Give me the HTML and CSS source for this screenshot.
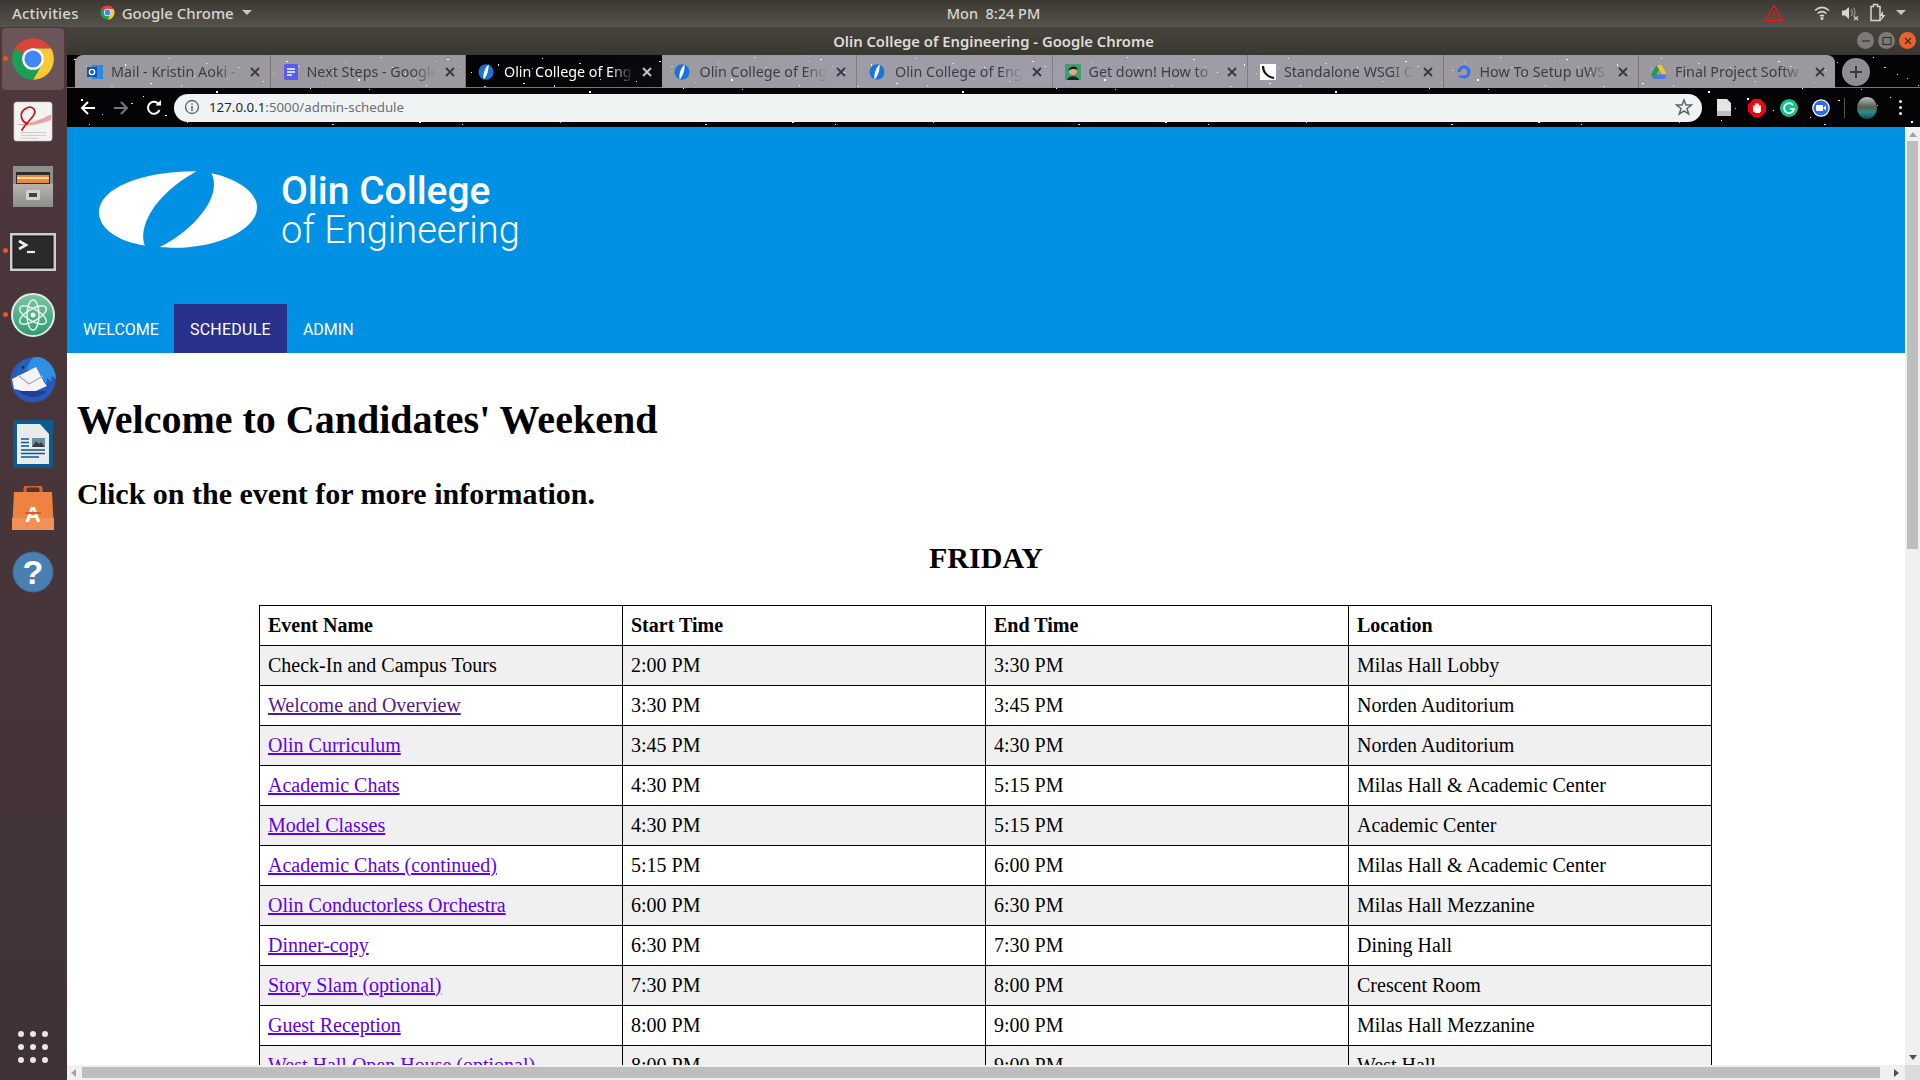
FILE: index.html
```html
<!DOCTYPE html>
<html lang="en">
<head>
  <meta charset="UTF-8" />
  <meta name="viewport" content="width=device-width, initial-scale=1.0"/>
  <title>Olin College of Engineering</title>
  <link rel="stylesheet" href="styles.css">
</head>
<body>
  <svg class="defs" width="0" height="0">
    <symbol id="chrome" viewBox="0 0 48 48">
      <path fill="#db4437" d="M6.68 14A20 20 0 0 1 41.32 14H24A10 10 0 0 0 15.34 19Z"/>
      <path fill="#fcc934" d="M41.32 14A20 20 0 0 1 24 44L32.66 29A10 10 0 0 0 24 14Z"/>
      <path fill="#1e9e54" d="M6.68 14A20 20 0 0 0 24 44L32.66 29A10 10 0 0 1 15.34 19Z"/>
      <circle cx="24" cy="24" r="10.4" fill="#fff"/>
      <circle cx="24" cy="24" r="8.2" fill="#4285f4"/>
    </symbol>
    <symbol id="olin" viewBox="0 0 16 16">
      <ellipse cx="8" cy="8" rx="7.500" ry="7.800" fill="#1a73d8"/>
      <path fill="#fff" d="M10.6 .4C8 2.500 6 6.500 5.500 10.500C5.300 12.500 5.400 14.500 5.800 15.500C7.500 13.500 9.800 9.500 10.300 5.500C10.600 3.200 10.700 1.500 10.600 .4Z"/>
    </symbol>
    <symbol id="close" viewBox="0 0 12 12">
      <path d="M2 2L10 10M10 2L2 10" fill="none" stroke="currentColor" stroke-width="1.800"/>
    </symbol>
  </svg>

  <header class="topbar">
    <div class="topbar-left">
      <span class="activities">Activities</span>
      <span class="app-menu">
        <svg class="mini" width="17" height="17"><use href="#chrome"/></svg>
        Google Chrome
        <i class="caret"></i>
      </span>
    </div>
    <div class="clock">Mon&nbsp;&nbsp;8:24 PM</div>
    <div class="indicators">
      <svg width="20" height="18" viewBox="0 0 20 18"><path d="M10 1.500L19 16.500H1Z" fill="none" stroke="#f01818" stroke-width="1.300"/><path d="M10 6.500V12M10 13.300V15" stroke="#f01818" stroke-width="1.500"/></svg>
      <span class="indicator-gap"></span>
      <svg width="18" height="16" viewBox="0 0 18 16"><path d="M2 5.500C6.500 1.500 11.500 1.500 16 5.500M4.500 8.500C7.500 6 10.500 6 13.500 8.500M7 11C8.300 10.200 9.700 10.200 11 11" fill="none" stroke="#d8d6d2" stroke-width="1.500"/><circle cx="9" cy="13.500" r="1.500" fill="#d8d6d2"/></svg>
      <svg width="18" height="16" viewBox="0 0 18 16"><path d="M1 5.500H4L8 2V14L4 10.500H1Z" fill="#d8d6d2"/><path d="M10 4C11.500 6 11.500 9 10 11M12.500 2.500C14.500 5 14.500 9 12.500 11.500" fill="none" stroke="#9a9892" stroke-width="1.200"/><path d="M13 11.500L17 15M17 11.500L13 15" stroke="#d8d6d2" stroke-width="1.200"/></svg>
      <svg width="18" height="20" viewBox="0 0 18 20"><path d="M2 3.500H4.500V1.500H8.500V3.500H11V17.500H2Z" fill="none" stroke="#d8d6d2" stroke-width="1.500"/><path d="M14 8L10.500 13H13L11.500 18L16.500 12H14Z" fill="#d8d6d2"/></svg>
      <i class="caret caret-wide"></i>
    </div>
  </header>

  <div class="desktop">
    <nav class="dock">
      <div class="dock-item is-active">
        <i class="running"></i>
        <svg width="50" height="50"><use href="#chrome"/></svg>
      </div>
      <div class="dock-item">
        <svg width="42" height="42" viewBox="0 0 44 44">
          <rect x="2" y="1" width="40" height="41" rx="3" fill="#f4f3f1" stroke="#bbb" stroke-width=".6"/>
          <path d="M3 24C14 26 30 20 41 14V20C30 24 16 28 3 24Z" fill="#e8a4a4"/>
          <path d="M17 24C9 22 7 12 14 8C21 4 27 9 22 16C18 21 12 27 10 31" fill="none" stroke="#c4141a" stroke-width="1.800"/>
          <path d="M9 33H36M9 36H36M9 39H28" stroke="#c9c9c9" stroke-width="1"/>
        </svg>
      </div>
      <div class="dock-item">
        <svg width="42" height="44" viewBox="0 0 42 44">
          <defs><linearGradient id="cabinet" x1="0" y1="0" x2="0" y2="1"><stop offset="0" stop-color="#b4b4b0"/><stop offset="1" stop-color="#8e8e8a"/></linearGradient></defs>
          <path d="M1 2H41V43H1Z" fill="#8f8f8b"/>
          <path d="M4 8H38V20H4Z" fill="#2b2b2a"/>
          <path d="M5 11H37V19H5Z" fill="#e8893c"/>
          <path d="M5 13H37V15H5Z" fill="#f6d9a8"/>
          <path d="M1 20H41V43H1Z" fill="url(#cabinet)"/>
          <rect x="14" y="26" width="14" height="10" rx="1.500" fill="#d2d2ce"/>
          <rect x="17" y="29" width="8" height="4" fill="#44443f"/>
        </svg>
      </div>
      <div class="dock-item">
        <i class="running"></i>
        <svg class="terminal-icon" width="46" height="38" viewBox="0 0 46 38">
          <rect x="0" y="0" width="46" height="38" fill="#cfcfca"/>
          <rect x="3" y="3" width="40" height="32" fill="#2a2a2a" stroke="#111"/>
          <path d="M9 8L16 12L9 16" fill="none" stroke="#eee" stroke-width="2.600"/>
          <path d="M17 19H25" stroke="#eee" stroke-width="2.200"/>
        </svg>
      </div>
      <div class="dock-item">
        <i class="running"></i>
        <svg width="44" height="44" viewBox="0 0 44 44">
          <defs><linearGradient id="atom" x1="0" y1="0" x2="0" y2="1"><stop offset="0" stop-color="#7cc6a2"/><stop offset="1" stop-color="#2f9a72"/></linearGradient></defs>
          <circle cx="22" cy="22" r="21" fill="url(#atom)" stroke="#dcefe6" stroke-width="2"/>
          <g fill="none" stroke="#e6f5ee" stroke-width="1.500">
            <ellipse cx="22" cy="22" rx="15" ry="6" transform="rotate(30 22 22)"/>
            <ellipse cx="22" cy="22" rx="15" ry="6" transform="rotate(-30 22 22)"/>
            <ellipse cx="22" cy="22" rx="15" ry="6" transform="rotate(90 22 22)"/>
          </g>
          <circle cx="22" cy="22" r="2.500" fill="#e6f5ee"/>
        </svg>
      </div>
      <div class="dock-item">
        <svg width="48" height="48" viewBox="0 0 48 48">
          <circle cx="24" cy="25" r="22.500" fill="#2a58b4"/>
          <path d="M8 20C10 8 20 1 30 2C40 4 47 14 47 24L42 21L43 27L38 23L38 29L33 23C30 17 24 14 16 15Z" fill="#2f8fe0"/>
          <path d="M8 20C10 10 18 3 25 2C21 6 19 9 18 13Z" fill="#1e62b8"/>
          <path d="M3 24L27 12L35 27L38 31L20 39L10 35L5 34Z" fill="#f4f4f6"/>
          <path d="M9 20L20 29L34 21" fill="none" stroke="#a8a8b4" stroke-width="1.200"/>
          <path d="M10 36C18 44 30 44 38 36L24 36Z" fill="#1f3f96"/>
          <circle cx="14" cy="12.500" r="1.300" fill="#222"/>
        </svg>
      </div>
      <div class="dock-item">
        <svg width="40" height="48" viewBox="0 0 40 48">
          <path d="M2 0H28L40 12V45A3 3 0 0 1 37 48H3A3 3 0 0 1 0 45V3A3 3 0 0 1 3 0Z" fill="#0e5a8a"/>
          <path d="M4 4H27L36 14V44H4Z" fill="#e8ebec"/>
          <path d="M28 0L40 0V12Z" fill="#0e5a8a"/>
          <rect x="19" y="18" width="13" height="9" fill="#6d8fa6"/>
          <path d="M19 27L23 21L26 24L28 22L32 27Z" fill="#3c3c3c"/>
          <path d="M8 19H16M8 22.500H16M8 26H16M8 30H32M8 33.500H32M8 37H26" stroke="#0e5a8a" stroke-width="1.500"/>
        </svg>
      </div>
      <div class="dock-item">
        <svg width="42" height="44" viewBox="0 0 42 44">
          <path d="M13 9V3C13 1 15 0 17 0H25C27 0 29 1 29 3V9" fill="none" stroke="#d9602a" stroke-width="3"/>
          <path d="M2 6H40L42 44H0Z" fill="#ee8240"/>
          <path d="M0 32H42V44H0Z" fill="#f19057"/>
          <text class="store-letter" x="21" y="36" text-anchor="middle">A</text>
          <path d="M13 27H29" stroke="#e95420" stroke-width="2"/>
        </svg>
      </div>
      <div class="dock-item">
        <svg width="42" height="42" viewBox="0 0 42 42">
          <circle cx="21" cy="21" r="20" fill="#4a7fb2" stroke="#3a6c9c" stroke-width="1"/>
          <text class="help-mark" x="21" y="33" text-anchor="middle">?</text>
        </svg>
      </div>
      <div class="app-grid">
        <i></i><i></i><i></i><i></i><i></i><i></i><i></i><i></i><i></i>
      </div>
    </nav>

    <main class="window">
      <div class="titlebar">
        <span>Olin College of Engineering - Google Chrome</span>
        <div class="win-buttons">
          <i class="win-btn"><svg width="10" height="10"><path d="M1 5H9" stroke="#333" stroke-width="1.300"/></svg></i>
          <i class="win-btn"><svg width="10" height="10"><rect x="1" y="1.500" width="8" height="7" fill="none" stroke="#333" stroke-width="1.200"/></svg></i>
          <i class="win-btn win-close"><svg width="10" height="10"><path d="M2 2L8 8M8 2L2 8" stroke="#4a2010" stroke-width="1.200"/></svg></i>
        </div>
      </div>

      <div class="chrome-ui">
        <div class="tabstrip">
          <div class="tab">
            <svg class="favicon" viewBox="0 0 16 16"><rect x="5" y="1" width="11" height="14" fill="#2a8ae0"/><rect x="0" y="3" width="10" height="10" fill="#1450b8"/><circle cx="5" cy="8" r="2.600" fill="none" stroke="#fff" stroke-width="1.400"/></svg>
            <span class="tab-title">Mail - Kristin Aoki - C</span>
            <svg class="tab-close"><use href="#close"/></svg>
          </div>
          <div class="tab">
            <svg class="favicon" viewBox="0 0 16 16"><rect x="1" y="0" width="14" height="16" rx="1.500" fill="#5a5cf0"/><path d="M4 5H12M4 8H12M4 11H9" stroke="#fff" stroke-width="1.400"/></svg>
            <span class="tab-title">Next Steps - Google</span>
            <svg class="tab-close"><use href="#close"/></svg>
          </div>
          <div class="tab is-current">
            <svg class="favicon favicon-olin"><use href="#olin"/></svg>
            <span class="tab-title">Olin College of Eng</span>
            <svg class="tab-close"><use href="#close"/></svg>
          </div>
          <div class="tab">
            <svg class="favicon favicon-olin"><use href="#olin"/></svg>
            <span class="tab-title">Olin College of Eng</span>
            <svg class="tab-close"><use href="#close"/></svg>
          </div>
          <div class="tab">
            <svg class="favicon favicon-olin"><use href="#olin"/></svg>
            <span class="tab-title">Olin College of Eng</span>
            <svg class="tab-close"><use href="#close"/></svg>
          </div>
          <div class="tab">
            <svg class="favicon" viewBox="0 0 16 16"><rect width="16" height="16" fill="#3f9e6c"/><path d="M2 16C3 11 13 11 14 16Z" fill="#222"/><circle cx="8" cy="7" r="4" fill="#d8a98c"/><path d="M3.500 7C3 1.500 13 1 12.500 6C10 4.500 6 4.500 3.500 7Z" fill="#1c1c1c"/></svg>
            <span class="tab-title">Get down! How to</span>
            <svg class="tab-close"><use href="#close"/></svg>
          </div>
          <div class="tab">
            <svg class="favicon" viewBox="0 0 16 16"><rect width="16" height="16" fill="#fff"/><path d="M3 2C3 8 7 13 14 14" fill="none" stroke="#111" stroke-width="2.200"/></svg>
            <span class="tab-title">Standalone WSGI C</span>
            <svg class="tab-close"><use href="#close"/></svg>
          </div>
          <div class="tab">
            <svg class="favicon" viewBox="0 0 16 16"><path d="M8 14.500V11.500A3.500 3.500 0 1 0 4.500 8H1.500A6.500 6.500 0 1 1 8 14.500Z" fill="#2f6df6"/><path d="M5 11.500H8V14H5ZM2.800 11.500H5V13.500H2.800Z" fill="#2f6df6"/></svg>
            <span class="tab-title">How To Setup uWS</span>
            <svg class="tab-close"><use href="#close"/></svg>
          </div>
          <div class="tab">
            <svg class="favicon" viewBox="0 0 16 16"><path d="M5.500 1H10.500L16 10.500H11Z" fill="#fbc02d"/><path d="M5.500 1L0 10.500L2.600 15L8 6Z" fill="#1e9e54"/><path d="M2.600 15H13.400L16 10.500H5.300Z" fill="#4a78e8"/></svg>
            <span class="tab-title">Final Project Softw</span>
            <svg class="tab-close"><use href="#close"/></svg>
          </div>
          <div class="new-tab"><svg width="14" height="14"><path d="M7 1V13M1 7H13" stroke="#3a3a40" stroke-width="2"/></svg></div>
        </div>

        <div class="toolbar">
          <svg class="tool" width="18" height="18" viewBox="0 0 18 18"><path d="M16 9H3M9 3L3 9L9 15" fill="none" stroke="#fff" stroke-width="2"/></svg>
          <svg class="tool" width="18" height="18" viewBox="0 0 18 18"><path d="M2 9H15M9 3L15 9L9 15" fill="none" stroke="#77767a" stroke-width="2"/></svg>
          <svg class="tool" width="18" height="18" viewBox="0 0 18 18"><path d="M14.500 11A6 6 0 1 1 14 5.500" fill="none" stroke="#fff" stroke-width="2"/><path d="M10.500 6.500H16V1Z" fill="#fff"/></svg>
          <div class="omnibox">
            <svg width="16" height="16" viewBox="0 0 16 16"><circle cx="8" cy="8" r="6.500" fill="none" stroke="#5f6368" stroke-width="1.300"/><path d="M8 7V12M8 4.300V5.800" stroke="#5f6368" stroke-width="1.500"/></svg>
            <span class="url"><b>127.0.0.1</b>:5000/admin-schedule</span>
            <svg class="star" width="18" height="18" viewBox="0 0 18 18"><path d="M9 2L11 7H16.500L12 10.500L13.700 16L9 12.800L4.300 16L6 10.500L1.500 7H7Z" fill="none" stroke="#5f6368" stroke-width="1.500"/></svg>
          </div>
          <div class="extensions">
            <svg class="ext-doc" width="16" height="19" viewBox="0 0 16 19"><path d="M1 1H11L15 5V18H1Z" fill="#e4e4e4"/><path d="M1 13H15V18H1Z" fill="#bdbdbd"/></svg>
            <svg width="18" height="18" viewBox="0 0 18 18"><path d="M5.500 0H12.500L18 5.500V12.500L12.500 18H5.500L0 12.500V5.500Z" fill="#e80a0a"/><path d="M6 13V6.500M8 13V4.500M10 13V4.500M12 13V6.500" stroke="#fff" stroke-width="1.800"/><path d="M6 9H12V14H7Z" fill="#fff"/></svg>
            <svg width="18" height="18" viewBox="0 0 18 18"><circle cx="9" cy="9" r="9" fill="#0fc38f"/><path d="M13 6A5 5 0 1 0 14 10H10" fill="none" stroke="#fff" stroke-width="1.700"/></svg>
            <svg width="18" height="18" viewBox="0 0 18 18"><circle cx="9" cy="9" r="8.200" fill="#2d6cf2" stroke="#fff" stroke-width="1.200"/><rect x="4" y="6" width="7" height="6" rx="1" fill="#fff"/><path d="M11.500 8.500L14 6.500V11.500L11.500 9.500Z" fill="#fff"/></svg>
            <i class="tool-sep"></i>
            <svg width="20" height="22" viewBox="0 0 20 22"><defs><linearGradient id="photo" x1="0" y1="0" x2="0" y2="1"><stop offset="0" stop-color="#b9c2c6"/><stop offset=".45" stop-color="#5a6048"/><stop offset=".7" stop-color="#2b8c8c"/><stop offset="1" stop-color="#144c54"/></linearGradient></defs><ellipse cx="10" cy="11" rx="10" ry="11" fill="url(#photo)"/></svg>
            <span class="menu-dots"><i></i><i></i><i></i></span>
          </div>
        </div>
      </div>

      <div class="viewport">
        <div class="page">
          <div class="banner">
            <div class="brand">
              <svg class="brand-mark" viewBox="117 92 475 230">
                <path fill="#fff" d="M410 92C240 92 117 145 117 215C117 265 175 303 255 315C235 270 270 170 410 92Z"/>
                <path fill="#fff" d="M455 98C535 115 592 155 592 200C592 270 470 322 345 322C330 322 315 322 300 320C400 270 490 170 455 98Z"/>
              </svg>
              <div class="brand-text">
                <div class="brand-name">Olin College</div>
                <div class="brand-sub">of Engineering</div>
              </div>
            </div>
            <ul class="site-nav">
              <li>WELCOME</li>
              <li class="current">SCHEDULE</li>
              <li>ADMIN</li>
            </ul>
          </div>

          <div class="content">
            <h1>Welcome to Candidates' Weekend</h1>
            <h2>Click on the event for more information.</h2>
            <h2 class="day">FRIDAY</h2>
            <table class="schedule">
              <tr><th>Event Name</th><th>Start Time</th><th>End Time</th><th>Location</th></tr>
              <tr><td>Check-In and Campus Tours</td><td>2:00 PM</td><td>3:30 PM</td><td>Milas Hall Lobby</td></tr>
              <tr><td><a class="visited" href="#">Welcome and Overview</a></td><td>3:30 PM</td><td>3:45 PM</td><td>Norden Auditorium</td></tr>
              <tr><td><a href="#">Olin Curriculum</a></td><td>3:45 PM</td><td>4:30 PM</td><td>Norden Auditorium</td></tr>
              <tr><td><a href="#">Academic Chats</a></td><td>4:30 PM</td><td>5:15 PM</td><td>Milas Hall &amp; Academic Center</td></tr>
              <tr><td><a href="#">Model Classes</a></td><td>4:30 PM</td><td>5:15 PM</td><td>Academic Center</td></tr>
              <tr><td><a href="#">Academic Chats (continued)</a></td><td>5:15 PM</td><td>6:00 PM</td><td>Milas Hall &amp; Academic Center</td></tr>
              <tr><td><a href="#">Olin Conductorless Orchestra</a></td><td>6:00 PM</td><td>6:30 PM</td><td>Milas Hall Mezzanine</td></tr>
              <tr><td><a href="#">Dinner-copy</a></td><td>6:30 PM</td><td>7:30 PM</td><td>Dining Hall</td></tr>
              <tr><td><a href="#">Story Slam (optional)</a></td><td>7:30 PM</td><td>8:00 PM</td><td>Crescent Room</td></tr>
              <tr><td><a href="#">Guest Reception</a></td><td>8:00 PM</td><td>9:00 PM</td><td>Milas Hall Mezzanine</td></tr>
              <tr><td><a href="#">West Hall Open House (optional)</a></td><td>8:00 PM</td><td>9:00 PM</td><td>West Hall</td></tr>
            </table>
          </div>
        </div>
        <div class="vscroll">
          <i class="arrow arrow-up"></i>
          <div class="vthumb"></div>
          <i class="arrow arrow-down"></i>
        </div>
      </div>

      <div class="hscroll">
        <i class="arrow arrow-left"></i>
        <div class="hthumb"></div>
        <i class="arrow arrow-right"></i>
        <i class="scroll-corner"></i>
      </div>
    </main>
  </div>
</body>
</html>
```

FILE: styles.css
```css
:root {
  --stars: url("data:image/svg+xml,%3Csvg xmlns='http://www.w3.org/2000/svg' width='373' height='72'%3E%3Cpath fill='%23fff' d='M7 4h2v1h-2zM31 17h1v1h-1zM58 9h1v2h-1zM83 28h2v1h-2zM102 3h1v1h-1zM127 21h1v1h-1zM149 36h2v2h-2zM171 12h1v1h-1zM196 26h1v1h-1zM219 6h2v1h-2zM243 33h1v1h-1zM266 15h1v1h-1zM291 24h2v2h-2zM314 2h1v1h-1zM338 19h1v1h-1zM359 30h1v1h-1zM14 44h2v2h-2zM47 52h1v1h-1zM76 41h1v1h-1zM98 60h2v1h-2zM133 47h1v1h-1zM162 65h1v1h-1zM188 43h2v2h-2zM214 55h1v1h-1zM251 62h1v1h-1zM279 45h2v1h-2zM305 58h1v1h-1zM331 42h1v1h-1zM352 66h2v2h-2zM22 69h1v1h-1z'/%3E%3Cpath fill='%23cfcaff' d='M19 11h1v1h-1zM44 31h2v1h-2zM70 18h1v1h-1zM92 13h1v1h-1zM114 30h1v2h-1zM139 8h2v1h-2zM160 24h1v1h-1zM183 32h1v1h-1zM206 18h1v1h-1zM231 11h2v1h-2zM255 27h1v1h-1zM278 7h1v1h-1zM302 34h1v1h-1zM325 12h2v1h-2zM348 23h1v1h-1zM368 6h1v1h-1zM35 59h1v1h-1zM64 48h2v1h-2zM120 67h1v1h-1zM176 53h1v1h-1zM235 46h1v1h-1zM265 69h2v1h-2zM318 50h1v1h-1z'/%3E%3C/svg%3E");
}

* {
  box-sizing: border-box;
}

html, body {
  margin: 0;
  height: 100%;
  overflow: hidden;
}

body {
  display: flex;
  flex-direction: column;
  width: 1920px;
  height: 1080px;
  font-family: "Noto Sans", sans-serif;
}

.defs {
  position: absolute;
}

/* ubuntu top bar */
.topbar {
  height: 27px;
  flex: none;
  display: grid;
  grid-template-columns: 1fr auto 1fr;
  align-items: center;
  padding: 0 12px 2px;
  background: linear-gradient(#3c3933, #56534b);
  color: #d8d6d2;
  font-size: 15px;
  font-weight: 500;
}

.topbar-left {
  display: flex;
  align-items: center;
  gap: 20px;
}

.activities {
  letter-spacing: .2px;
}

.app-menu {
  display: flex;
  align-items: center;
  gap: 6px;
}

.clock {
  margin-left: 67px;
  font-size: 14.500px;
}

.caret {
  width: 0;
  height: 0;
  margin-left: 2px;
  border-left: 5px solid transparent;
  border-right: 5px solid transparent;
  border-top: 5px solid #c8c6c2;
}

.caret-wide {
  margin-left: -1px;
}

.indicators {
  display: flex;
  justify-content: flex-end;
  align-items: center;
  gap: 10px;
  padding-right: 2px;
}

.indicator-gap {
  width: 9px;
}

.desktop {
  flex: 1;
  display: flex;
  min-height: 0;
}

/* launcher */
.dock {
  width: 67px;
  flex: none;
  display: flex;
  flex-direction: column;
  align-items: center;
  padding: 1px 1px 0 0;
  background: linear-gradient(#4e383c, #3f3236);
}

.dock-item {
  position: relative;
  width: 62px;
  height: 64.300px;
  display: flex;
  align-items: center;
  justify-content: center;
  flex: none;
}

.dock-item.is-active {
  height: 62px;
  background: #6a5558;
  border-radius: 4px;
}

.terminal-icon {
  margin-top: 3px;
}

.running {
  position: absolute;
  left: 1px;
  top: calc(50% - 3px);
  width: 5px;
  height: 5px;
  border-radius: 50%;
  background: #e95420;
}

.store-letter {
  font: 700 22px "Liberation Sans", sans-serif;
  fill: #fff;
}

.help-mark {
  font: 700 34px "Liberation Sans", sans-serif;
  fill: #fff;
}

.app-grid {
  margin-top: auto;
  margin-bottom: 17px;
  display: grid;
  grid-template-columns: repeat(3, 6px);
  gap: 7px 6px;
}

.app-grid i {
  width: 6px;
  height: 6px;
  border-radius: 50%;
  background: #e8e6e6;
}

/* browser window */
.window {
  flex: 1;
  min-width: 0;
  display: flex;
  flex-direction: column;
}

.titlebar {
  position: relative;
  height: 28px;
  flex: none;
  display: flex;
  align-items: center;
  justify-content: center;
  padding-bottom: 1px;
  background: linear-gradient(#47443e, #393731);
  color: #dedcd8;
  font-size: 14.800px;
  font-weight: 600;
}

.win-buttons {
  position: absolute;
  right: 4px;
  top: 5px;
  display: flex;
  gap: 4px;
}

.win-btn {
  width: 17px;
  height: 17px;
  border-radius: 50%;
  display: flex;
  align-items: center;
  justify-content: center;
  background: #7d7b76;
}

.win-close {
  background: #e8632c;
}

.chrome-ui {
  flex: none;
  background: var(--stars), #040406;
}

.tabstrip {
  position: relative;
  height: 33px;
  display: flex;
  align-items: stretch;
  padding-left: 8px;
  border-bottom: 1px solid #77767a;
}

/* the wallpaper shows through the tabs */
.tabstrip::after {
  content: "";
  position: absolute;
  inset: 0;
  background: radial-gradient(ellipse 500px 40px at 52% 60%, rgba(190, 180, 255, .16), transparent), var(--stars);
}

.tab {
  width: 195.500px;
  height: 33px;
  flex: none;
  display: flex;
  align-items: center;
  gap: 8px;
  padding: 0 9px 0 12px;
  color: #3c3c46;
  font-size: 14.300px;
  background: #9b999d;
  border-right: 1px solid #77767a;
}

.tab > * {
  position: relative;
  z-index: 1;
}

.tab:first-child {
  border-top-left-radius: 8px;
}

.tab:nth-child(9) {
  border-right: none;
  border-top-right-radius: 8px;
}

.tab.is-current {
  background: none;
  color: #fff;
  border-right: none;
}

.favicon {
  width: 16px;
  height: 16px;
  flex: none;
}

.favicon-olin {
  margin-right: 2px;
}

.tab-title {
  flex: 1;
  min-width: 0;
  white-space: nowrap;
  overflow: hidden;
  -webkit-mask-image: linear-gradient(90deg, #000 82%, transparent);
  mask-image: linear-gradient(90deg, #000 82%, transparent);
}

.tab-close {
  width: 12px;
  height: 12px;
  flex: none;
  color: #38383e;
}

.is-current .tab-close {
  color: #c8c8c8;
}

.new-tab {
  position: relative;
  z-index: 1;
  width: 28px;
  height: 28px;
  margin: 3px 0 0 7px;
  border-radius: 50%;
  display: flex;
  align-items: center;
  justify-content: center;
  background: #8f8d91;
}

.toolbar {
  height: 39px;
  display: flex;
  align-items: center;
  padding-left: 12px;
}

.tool {
  margin-right: 15px;
  flex: none;
}

.omnibox {
  width: 1528px;
  height: 28px;
  flex: none;
  margin-left: -4px;
  display: flex;
  align-items: center;
  gap: 9px;
  padding: 0 9px 2px 10px;
  border-radius: 14px;
  background: #f0f3f4;
  color: #6a6e72;
  font-size: 13.300px;
}

.url b {
  font-weight: 400;
  color: #24262a;
}

.star {
  margin-left: auto;
}

.extensions {
  display: flex;
  align-items: center;
  gap: 14px;
  padding-left: 14px;
}

.ext-doc {
  margin-right: 2px;
}

.tool-sep {
  width: 1px;
  height: 20px;
  margin-right: -2px;
  background: #55555a;
}

.menu-dots {
  display: flex;
  flex-direction: column;
  gap: 3px;
  margin-left: 8px;
}

.menu-dots i {
  width: 3px;
  height: 3px;
  background: #f2f2f2;
  border-radius: 50%;
}

/* page area */
.viewport {
  flex: 1;
  display: flex;
  min-height: 0;
}

.page {
  flex: 1;
  min-width: 0;
  overflow: hidden;
  background: #fff;
  color: #000;
  font-family: "Liberation Serif", serif;
}

.banner {
  height: 226px;
  display: flex;
  flex-direction: column;
  justify-content: space-between;
  background: #0090e4;
}

.brand {
  display: flex;
  align-items: center;
  gap: 24px;
  padding: 44px 0 0 32px;
  color: #fff;
  font-family: Roboto, sans-serif;
}

.brand-mark {
  width: 158px;
  height: 77px;
  margin-top: -2px;
}

.brand-name {
  font-size: 39px;
  font-weight: 500;
  line-height: 40px;
}

.brand-sub {
  font-size: 38px;
  font-weight: 300;
  line-height: 38px;
}

.site-nav {
  display: flex;
  margin: 0;
  padding: 0;
  list-style: none;
  color: #fff;
  font-family: Roboto, sans-serif;
  font-size: 16px;
}

.site-nav li {
  height: 49px;
  line-height: 52px;
  padding: 0 16px;
}

.site-nav li:first-child {
  padding-right: 15px;
}

.site-nav .current {
  letter-spacing: .25px;
  background: #29318c;
}

.content {
  padding: 0 10px;
  height: 800px;
}

h1 {
  margin: 0;
  padding-top: 42px;
  font-size: 40px;
  line-height: 50px;
}

h2 {
  margin: 0;
  padding-top: 31px;
  font-size: 30px;
  line-height: 35px;
}

.day {
  padding-top: 29px;
  margin-bottom: 30px;
  text-align: center;
}

.schedule {
  width: 1453px;
  margin: 0 0 0 182px;
  table-layout: fixed;
  border-collapse: collapse;
  font-size: 20px;
}

.schedule th,
.schedule td {
  height: 40px;
  padding: 0 8px;
  border: 1px solid #000;
  text-align: left;
  white-space: nowrap;
}

.schedule tr:nth-child(even) {
  background: #f0f0f0;
}

.schedule a {
  color: #6200ee;
}

.schedule a.visited {
  color: #551a8b;
}

/* scrollbars */
.vscroll {
  width: 15px;
  flex: none;
  display: flex;
  flex-direction: column;
  align-items: center;
  padding: 5px 0;
  background: #f0f0f0;
}

.vthumb {
  width: 11px;
  height: 408px;
  margin-top: 4px;
  background: #bebebe;
}

.arrow {
  width: 0;
  height: 0;
  flex: none;
  border: 4px solid transparent;
}

.arrow-up {
  border-top: none;
  border-bottom: 5px solid #a3a3a3;
}

.arrow-down {
  margin-top: auto;
  border-bottom: none;
  border-top: 5px solid #505050;
}

.hscroll {
  height: 15px;
  flex: none;
  display: flex;
  align-items: center;
  padding-left: 4px;
  background: #f0f0f0;
}

.hthumb {
  width: 1798px;
  height: 11px;
  margin-left: 6px;
  background: #bebebe;
}

.arrow-left {
  border-left: none;
  border-right: 5px solid #a3a3a3;
}

.arrow-right {
  margin-left: 14px;
  border-right: none;
  border-left: 5px solid #505050;
}

.scroll-corner {
  width: 15px;
  height: 15px;
  margin-left: auto;
  background: #dcdcdc;
}
```
